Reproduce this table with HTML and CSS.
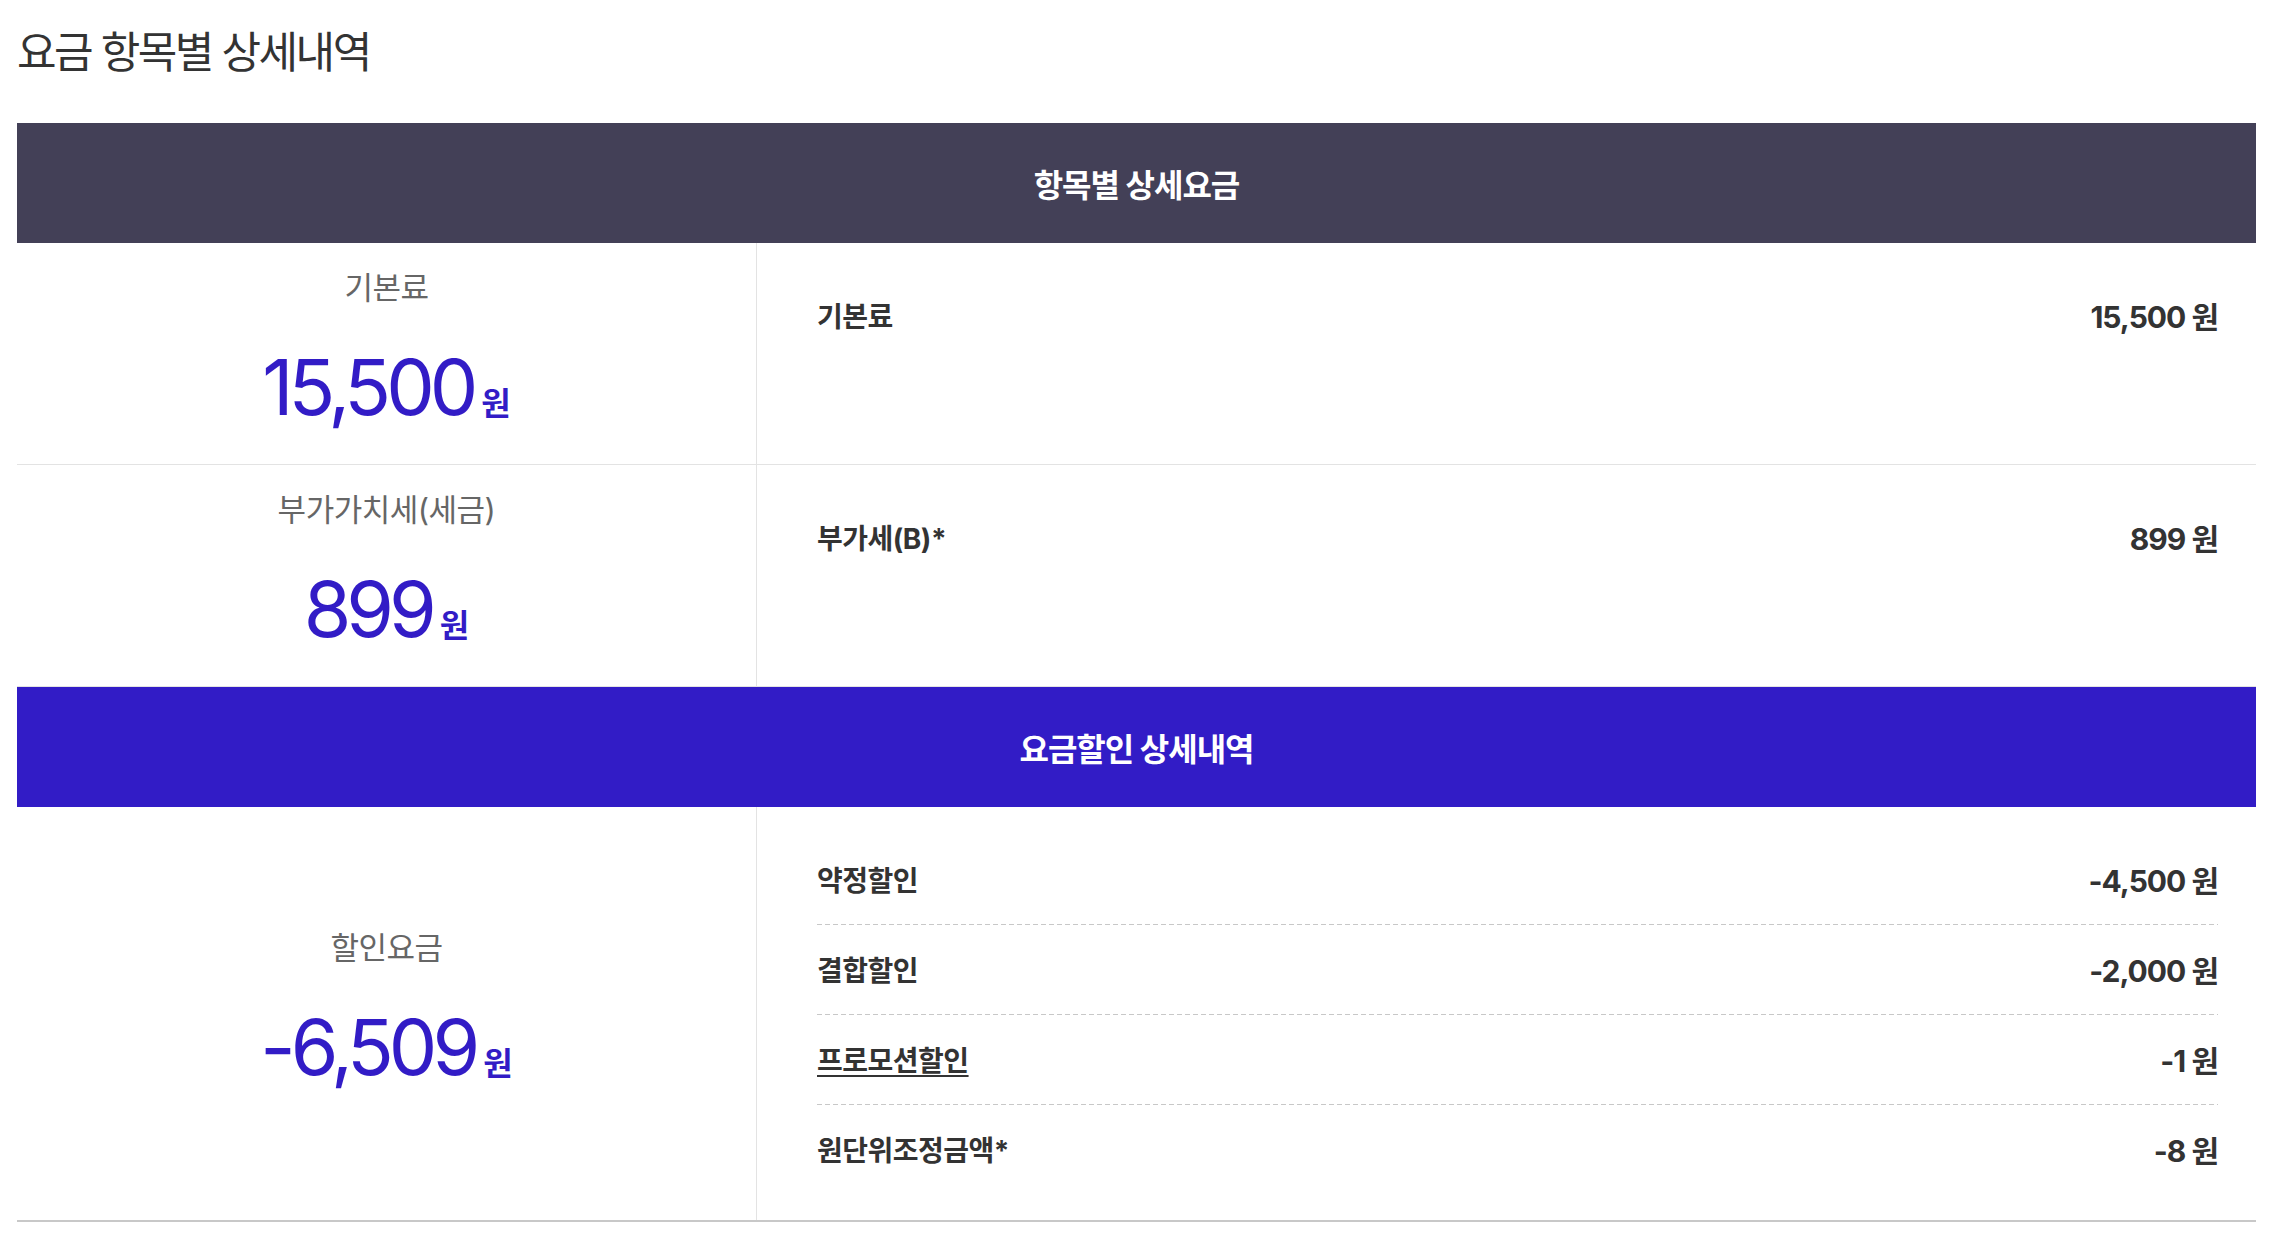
FILE: index.html
```html
<!DOCTYPE html>
<html lang="ko">
<head>
  <meta charset="UTF-8" />
  <meta name="viewport" content="width=device-width, initial-scale=1.0"/>
  <title>요금 항목별 상세내역</title>
  <link rel="stylesheet" href="styles.css">
</head>
<body>
  <main class="fee-detail">
    <h2 class="fee-title">요금 항목별 상세내역</h2>

    <div class="sec-head">항목별 상세요금</div>

    <div class="fee-row">
      <div class="sum-cell">
        <div class="sum-label">기본료</div>
        <div class="sum-value"><span class="num">15,500</span><span class="won">원</span></div>
      </div>
      <ul class="item-list">
        <li><span class="item-name">기본료</span><span class="item-price">15,500 원</span></li>
      </ul>
    </div>

    <div class="fee-row">
      <div class="sum-cell">
        <div class="sum-label">부가가치세(세금)</div>
        <div class="sum-value"><span class="num">899</span><span class="won">원</span></div>
      </div>
      <ul class="item-list">
        <li><span class="item-name">부가세(B)*</span><span class="item-price">899 원</span></li>
      </ul>
    </div>

    <div class="sec-head sec-head-blue">요금할인 상세내역</div>

    <div class="fee-row fee-row-last">
      <div class="sum-cell">
        <div class="sum-label">할인요금</div>
        <div class="sum-value"><span class="num">-6,509</span><span class="won">원</span></div>
      </div>
      <ul class="item-list">
        <li><span class="item-name">약정할인</span><span class="item-price">-4,500 원</span></li>
        <li><span class="item-name">결합할인</span><span class="item-price">-2,000 원</span></li>
        <li><span class="item-name item-link">프로모션할인</span><span class="item-price">-1 원</span></li>
        <li><span class="item-name">원단위조정금액*</span><span class="item-price">-8 원</span></li>
      </ul>
    </div>
  </main>
</body>
</html>
```

FILE: styles.css
```css
body { margin: 0; padding: 0; background: #fff; font-family: Inter, "Noto Sans CJK KR", sans-serif; color: #333; }
.fee-detail { margin: 0 22px 0 17px; }
.fee-title { margin: 0; padding: 23px 0 0; height: 123px; box-sizing: border-box; font-size: 43px; line-height: 58px; font-weight: 400; letter-spacing: -2.5px; color: #333; }
.sec-head { height: 120px; display: flex; align-items: center; justify-content: center; background: #434057; color: #fff; font-size: 32px; font-weight: 700; letter-spacing: -1px; }
.sec-head-blue { background: #321cc6; }
.fee-row { display: grid; grid-template-columns: 740px 1fr; border-bottom: 1px solid #e3e3e3; }
.fee-row-last { border-bottom: 2px solid #c8c8c8; }
.sum-cell { display: flex; flex-direction: column; justify-content: center; align-items: center; padding: 30px 0 37px; border-right: 1px solid #e3e3e3; }
.sum-label { font-size: 31px; line-height: 30px; letter-spacing: -0.5px; color: #666; }
.sum-value { display: flex; align-items: baseline; height: 80px; margin-top: 44px; color: #321cc6; }
.num { font-size: 77px; line-height: 80px; font-weight: 400; letter-spacing: -5px; }
.won { margin-left: 8px; font-size: 32px; line-height: 32px; font-weight: 700; }
.item-list { list-style: none; margin: 0; padding: 27px 38px 26px 60px; }
.item-list li { height: 90px; display: flex; align-items: center; justify-content: space-between; }
.item-list li + li { background: repeating-linear-gradient(to right, #c8c8c8 0 5px, transparent 5px 8px) top / 100% 1px no-repeat; }
.item-name { font-size: 28px; font-weight: 700; letter-spacing: -0.5px; color: #333; }
.item-link { text-decoration: underline; text-underline-offset: 4px; }
.item-price { font-size: 30px; font-weight: 700; letter-spacing: -1px; color: #333; }
```
